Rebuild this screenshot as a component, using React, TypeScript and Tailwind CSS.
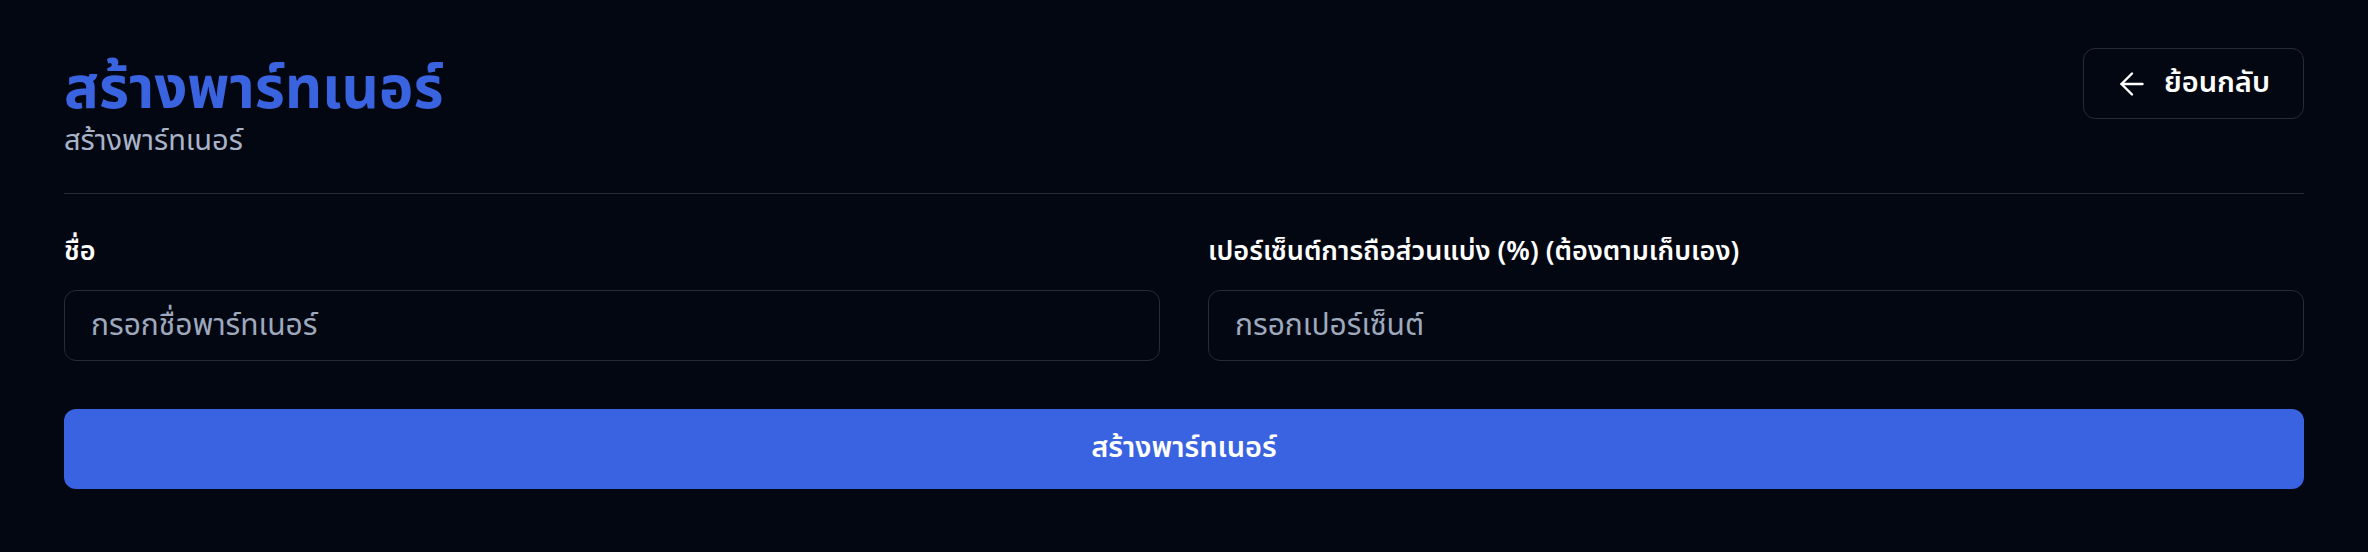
import React, { useState } from 'react';
import { ArrowLeft } from 'lucide-react';

const App: React.FC = () => {
  const [name, setName] = useState<string>('');
  const [percent, setPercent] = useState<string>('');

  return (
    <div className="min-h-screen bg-[#030712] px-[64px] pt-[48px] pb-[60px] font-['Noto_Sans_Thai','Noto_Sans',sans-serif]">
      {/* Header */}
      <div className="flex items-start justify-between">
        <div className="pt-[10px]">
          <h1 className="text-[58px] leading-[64px] font-bold text-[#3a63e0]">สร้างพาร์ทเนอร์</h1>
          <p className="text-[29px] leading-[38px] text-[#a9b4c8]">สร้างพาร์ทเนอร์</p>
        </div>
        <button className="flex h-[71px] items-center gap-[14px] rounded-[12px] border-[1.5px] border-[#262b37] pl-[30px] pr-[33px] text-[29px] font-semibold text-white">
          <ArrowLeft size={36} strokeWidth={1.6} />
          <span>ย้อนกลับ</span>
        </button>
      </div>

      <div className="mt-[33px] border-t-[1.5px] border-[#262b37]" />

      {/* Form */}
      <div className="mt-[40px] grid grid-cols-2 gap-x-[48px]">
        <div>
          <label htmlFor="name" className="block text-[27px] leading-[36px] font-semibold text-white mb-[20px]">ชื่อ</label>
          <input
            id="name"
            type="text"
            value={name}
            onChange={(e) => setName(e.target.value)}
            placeholder="กรอกชื่อพาร์ทเนอร์"
            className="h-[71px] w-full rounded-[12px] border-[1.5px] border-[#262b37] bg-[#030712] px-[26px] text-[30px] text-white placeholder:text-[#9ea9be] outline-none"
          />
        </div>
        <div>
          <label htmlFor="percent" className="block text-[27px] leading-[36px] font-semibold text-white mb-[20px]">เปอร์เซ็นต์การถือส่วนแบ่ง (%) (ต้องตามเก็บเอง)</label>
          <input
            id="percent"
            type="text"
            value={percent}
            onChange={(e) => setPercent(e.target.value)}
            placeholder="กรอกเปอร์เซ็นต์"
            className="h-[71px] w-full rounded-[12px] border-[1.5px] border-[#262b37] bg-[#030712] px-[26px] text-[30px] text-white placeholder:text-[#9ea9be] outline-none"
          />
        </div>
      </div>

      <button className="mt-[48px] h-[80px] w-full rounded-[12px] bg-[#3963e1] text-[29px] font-semibold text-white">
        สร้างพาร์ทเนอร์
      </button>
    </div>
  );
};

export default App;
